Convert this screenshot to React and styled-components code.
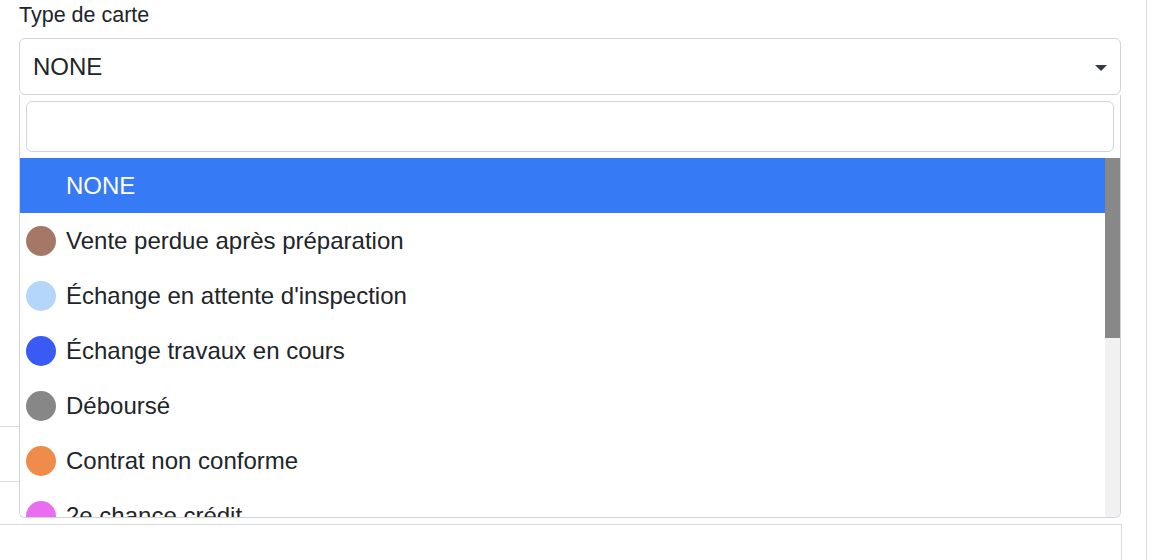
import React from 'react';
import styled, { createGlobalStyle } from 'styled-components';

const GlobalStyle = createGlobalStyle`
  html, body {
    margin: 0;
    padding: 0;
    background: #fff;
    font-family: "Liberation Sans", Arial, Helvetica, sans-serif;
    color: #212529;
    overflow: hidden;
  }
`;

const Panel = styled.div`
  width: 1146px;
  min-height: 100vh;
  border-right: 1px solid #d8dbe0;
  box-sizing: content-box;
`;

const FormGroup = styled.div`
  padding: 0 25px 0 19px;
`;

const Label = styled.label`
  display: block;
  font-size: 21.5px;
  line-height: 31.5px;
  margin-bottom: 6.5px;
`;

const SelectWrap = styled.div`
  position: relative;
  width: 1102px;
`;

const SelectBox = styled.div`
  box-sizing: border-box;
  height: 57px;
  border: 1px solid #ced4da;
  border-radius: 6px;
  display: flex;
  align-items: center;
  justify-content: space-between;
  padding: 0 13px;
  font-size: 24px;
  background: #fff;
`;

const Caret = styled.span`
  width: 0;
  height: 0;
  border-left: 6px solid transparent;
  border-right: 6px solid transparent;
  border-top: 6px solid #343a40;
  margin-top: 2px;
`;

const Dropdown = styled.div`
  position: absolute;
  top: 100%;
  left: 0;
  right: 0;
  z-index: 10;
  background: #fff;
  border: 1px solid #ced4da;
  border-top: none;
  border-radius: 0 0 6px 6px;
  overflow: hidden;
`;

const SearchArea = styled.div`
  padding: 6px;
`;

const SearchInput = styled.input`
  display: block;
  box-sizing: border-box;
  width: 100%;
  height: 51px;
  border: 1px solid #ced4da;
  border-radius: 6px;
  outline: none;
  font-size: 24px;
  font-family: inherit;
  padding: 0 12px;
`;

const ListWrap = styled.div`
  position: relative;
  height: 359px;
  padding-right: 15px;
`;

const OptionList = styled.ul`
  list-style: none;
  margin: 0;
  padding: 0;
  height: 100%;
  overflow: hidden;
`;

const ScrollTrack = styled.div`
  position: absolute;
  top: 0;
  right: 0;
  bottom: 0;
  width: 15px;
  background: #f1f1f1;
`;

const ScrollThumb = styled.div`
  width: 100%;
  background: #888;
`;

const Option = styled.li`
  height: 55px;
  display: flex;
  align-items: center;
  gap: 10px;
  padding-left: 6px;
  font-size: 24px;
  background: ${(p) => (p.$active ? '#367af6' : '#fff')};
  color: ${(p) => (p.$active ? '#fff' : '#212529')};
  white-space: nowrap;
`;

const Dot = styled.span`
  flex: none;
  width: 30px;
  height: 30px;
  border-radius: 50%;
  background: ${(p) => p.$color || 'transparent'};
`;

const Rows = styled.div`
  margin-top: 277px;
  width: 1121px;
`;

const Row = styled.div`
  height: 54px;
  border-bottom: 1px solid #d8dbe0;
`;

const Card = styled.div`
  margin-top: 42px;
  width: 1121px;
  height: 60px;
  border-top: 1px solid #d8dbe0;
  border-right: 1px solid #d8dbe0;
`;

const options = [
  { label: 'NONE', color: null },
  { label: 'Vente perdue après préparation', color: '#a57766' },
  { label: "Échange en attente d'inspection", color: '#b3d6fa' },
  { label: 'Échange travaux en cours', color: '#3a5af5' },
  { label: 'Déboursé', color: '#878787' },
  { label: 'Contrat non conforme', color: '#ef8b4b' },
  { label: '2e chance crédit', color: '#ea6cf1' },
  { label: 'Dossier incomplet', color: '#f2c94c' },
  { label: 'Livraison planifiée', color: '#4caf50' },
  { label: 'En attente de financement', color: '#9b59b6' },
  { label: 'Véhicule en transit', color: '#1abc9c' },
  { label: 'Annulé', color: '#e74c3c' },
  { label: 'Vendu', color: '#2c3e50' },
];

const LIST_HEIGHT = 359;
const ROW_HEIGHT = 55;

export default function App() {
  const thumb = Math.round((LIST_HEIGHT * LIST_HEIGHT) / (options.length * ROW_HEIGHT));
  return (
    <Panel>
      <GlobalStyle />
      <FormGroup>
        <Label>Type de carte</Label>
        <SelectWrap>
          <SelectBox>
            <span>NONE</span>
            <Caret />
          </SelectBox>
          <Dropdown>
            <SearchArea>
              <SearchInput type="text" />
            </SearchArea>
            <ListWrap>
              <OptionList>
                {options.map((o, i) => (
                  <Option key={o.label} $active={i === 0}>
                    <Dot $color={o.color} />
                    {o.label}
                  </Option>
                ))}
              </OptionList>
              <ScrollTrack>
                <ScrollThumb style={{ height: thumb }} />
              </ScrollTrack>
            </ListWrap>
          </Dropdown>
        </SelectWrap>
      </FormGroup>
      <Rows>
        <Row />
        <Row />
      </Rows>
      <Card />
    </Panel>
  );
}
